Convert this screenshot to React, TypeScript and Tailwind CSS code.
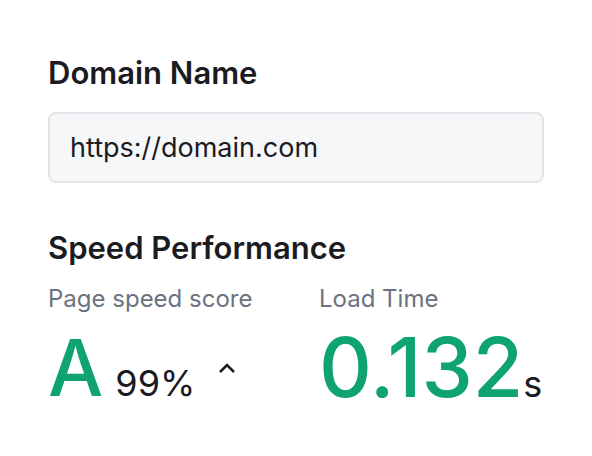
export default function App() {
  return (
    <div
      className="min-h-screen bg-white px-12 pt-[53px] text-[#1b1b22]"
      style={{ fontFamily: "Inter, 'Noto Sans', sans-serif" }}
    >
      <h2 className="text-[31px] font-semibold leading-[40px]">Domain Name</h2>
      <div className="mt-[19px] flex h-[71px] w-[496px] items-center rounded-lg border-2 border-[#e2e4e8] bg-[#f6f7f9] px-5 pt-0.5 text-[27px]">
        https://domain.com
      </div>

      <h2 className="mt-[45px] text-[31px] font-semibold leading-[40px]">Speed Performance</h2>
      <div className="mt-4 flex">
        <div className="w-[271px]">
          <div className="text-[24px] leading-[30px] text-[#6b7280]">Page speed score</div>
          <div className="mt-[14px] flex items-baseline">
            <span className="text-[78px] font-medium leading-[80px] text-[#0ea371]">A</span>
            <span className="ml-3 text-[36px] leading-[40px]">99%</span>
            <svg
              className="ml-[22px] self-center"
              width="20"
              height="14"
              viewBox="0 0 20 14"
              fill="none"
              stroke="currentColor"
              strokeWidth="2.6"
            >
              <path d="M3 11 L10 4 L17 11" />
            </svg>
          </div>
        </div>
        <div>
          <div className="text-[24px] leading-[30px] text-[#6b7280]">Load Time</div>
          <div className="mt-[14px] flex items-baseline">
            <span className="text-[82px] font-medium leading-[80px] text-[#0ea371]">0.132</span>
            <span className="text-[36px] leading-[40px]">s</span>
          </div>
        </div>
      </div>
    </div>
  );
}
